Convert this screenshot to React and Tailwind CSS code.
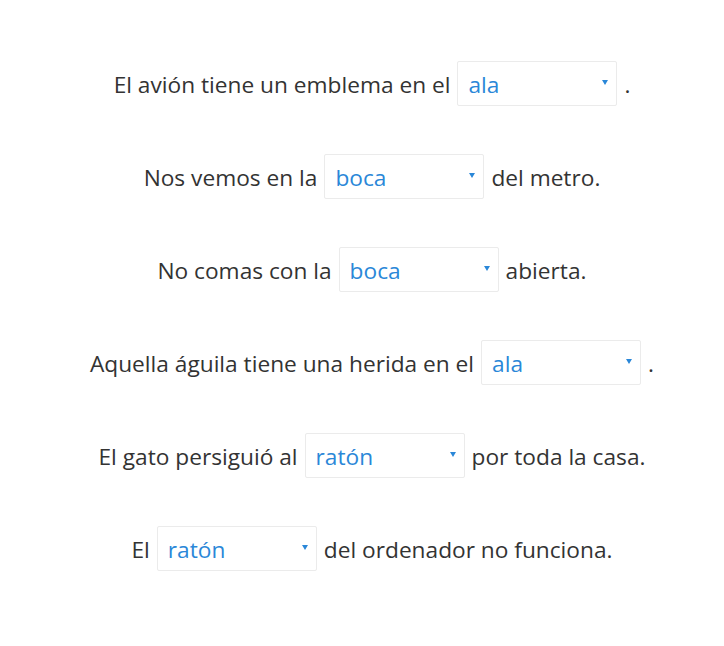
import React, { useState } from 'react';

const sentences = [
  { before: 'El avión tiene un emblema en el', after: '.', value: 'ala' },
  { before: 'Nos vemos en la', after: 'del metro.', value: 'boca' },
  { before: 'No comas con la', after: 'abierta.', value: 'boca' },
  { before: 'Aquella águila tiene una herida en el', after: '.', value: 'ala' },
  { before: 'El gato persiguió al', after: 'por toda la casa.', value: 'ratón' },
  { before: 'El', after: 'del ordenador no funciona.', value: 'ratón' },
];

const options = ['ala', 'boca', 'ratón'];

const Dropdown = ({ value, onChange }) => (
  <div className="relative mx-[7px]">
    <select
      value={value}
      onChange={(e) => onChange(e.target.value)}
      className="appearance-none w-[160px] h-[45px] pl-[10px] pr-6 pt-[3px] bg-white border border-[#ebebeb] rounded-[2px] text-[#2a87d8] text-[22.7px] outline-none"
    >
      {options.map((o) => (
        <option key={o} value={o}>{o}</option>
      ))}
    </select>
    <svg className="absolute right-[9px] top-[19px] pointer-events-none" width="6" height="5" viewBox="0 0 6 5">
      <path d="M0 0h6L3 5z" fill="#2a87d8" />
    </svg>
  </div>
);

const App = () => {
  const [answers, setAnswers] = useState(sentences.map((s) => s.value));

  return (
    <div className="min-h-screen bg-white pl-[20px] pt-[61px] font-['Open_Sans',sans-serif] text-[#333333] text-[22.7px]">
      {sentences.map((s, i) => (
        <div key={i} className="flex items-center justify-center h-[45px] mb-[48px]">
          <span className="pt-[3px]">{s.before}</span>
          <Dropdown
            value={answers[i]}
            onChange={(v) => setAnswers(answers.map((a, j) => (j === i ? v : a)))}
          />
          <span className="pt-[3px]">{s.after}</span>
        </div>
      ))}
    </div>
  );
};

export default App;
